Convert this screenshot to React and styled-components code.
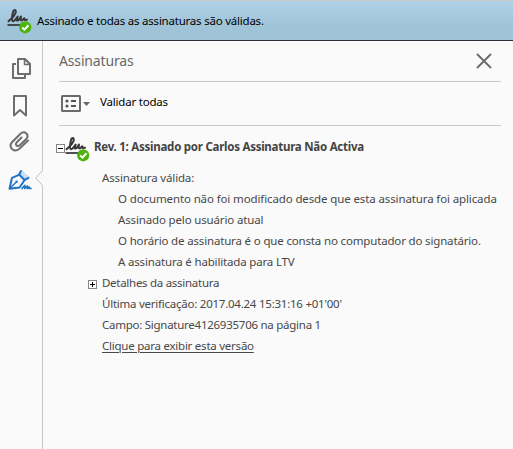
import React from "react";
import styled, { createGlobalStyle, css } from "styled-components";

const GlobalStyle = createGlobalStyle`
  * { box-sizing: border-box; }
  body {
    margin: 0;
    background: #fafafa;
    font-family: "Noto Sans", "Open Sans", sans-serif;
    font-size: 11.5px;
    color: #484848;
  }
`;

const Window = styled.div`
  display: flex;
  flex-direction: column;
  width: 513px;
  height: 449px;
  overflow: hidden;
`;

const StatusBar = styled.header`
  display: flex;
  align-items: flex-start;
  gap: 4px;
  height: 41px;
  padding: 7px 0 0 7px;
  border-top: 1px solid #c9c9c9;
  border-bottom: 1px solid #2c3038;
  background: linear-gradient(#b1d0e9 0, #9fc4d8 24px, #9fc4d8 100%);
`;

const Label = styled.span`
  display: block;
  white-space: nowrap;
  letter-spacing: ${(p) => p.$track || 0}px;
  line-height: 21px;
`;

const StatusText = styled(Label)`
  margin-top: 2px;
  color: #000;
`;

const Body = styled.div`
  display: flex;
  flex: 1;
  min-height: 0;
`;

const Sidebar = styled.nav`
  position: relative;
  width: 43px;
  flex: none;
  padding: 16px 0 0 8px;
  display: flex;
  flex-direction: column;
  border-right: 1px solid #c8c8c8;
`;

const Tool = styled.div`
  height: ${(p) => p.$h}px;
  svg { display: block; }
`;

const Notch = styled.svg`
  position: absolute;
  top: 129px;
  right: -1px;
`;

const Panel = styled.main`
  width: 442px;
  margin-left: 16px;
`;

const PanelHeader = styled.div`
  display: flex;
  justify-content: space-between;
  height: 41px;
  padding: 9px 8px 0 0;
  border-bottom: 1px solid #c8c8c8;
`;

const Title = styled.h1`
  margin: 0;
  font-size: 14px;
  font-weight: 400;
  line-height: 22px;
  letter-spacing: -0.15px;
  color: #686868;
`;

const CloseIcon = styled.svg`
  margin-top: 2px;
`;

const Toolbar = styled.div`
  display: flex;
  height: 44px;
  padding: 9px 0 0 2px;
  gap: 9px;
  border-bottom: 1px solid #c8c8c8;
  color: #000;
  svg { margin-top: 4px; }
`;

const SignatureHead = styled.div`
  display: flex;
  height: 41px;
  margin-left: -3px;
  padding-top: 10px;
`;

const Toggle = styled.svg`
  flex: none;
  ${(p) => p.$head ? css`margin: 8px 0 0;` : css`margin: 8px 5px 0 -14px;`}
`;

const Heading = styled(Label)`
  margin-left: 3px;
  font-weight: 700;
  color: #444;
`;

const Details = styled.div`
  padding-left: 43px;
`;

const Line = styled.div`
  display: flex;
  height: 21px;
  padding-left: ${(p) => (p.$nested ? 16 : 0)}px;
`;

const VersionLink = styled(Label)`
  text-decoration: underline;
  text-underline-offset: 2px;
  text-decoration-thickness: 1px;
`;

function SignedMark() {
  return (
    <svg width="26" height="26" viewBox="0 0 26 26" fill="none">
      <path d="M1.5 13.3L4.5 10.5C8 7.5 9.7 3.5 8.3 2.2C6.3 1 5.4 6 5 9.5C4.6 13.5 6 14 8 12L10.7 8.5L9.8 12.5C11.8 13 13.3 10 14 8.5C13.3 12 14 13 15.5 12L17.3 10.3L17.7 12L20 11.7" stroke="#383838" strokeWidth="2" strokeLinecap="round" strokeLinejoin="round" />
      <path d="M.5 17H13" stroke="#333" strokeWidth="1.7" />
      <circle cx="18.2" cy="19.3" r="6.1" fill="#4cb40d" />
      <path d="M15.2 19.5L17.4 21.6L21.5 17.2" stroke="#fff" strokeWidth="2" />
    </svg>
  );
}

function Expander({ open, head }) {
  return (
    <Toggle $head={head} width="9" height="9" viewBox="0 0 9 9" fill="none" shapeRendering="crispEdges">
      <rect x=".5" y=".5" width="8" height="8" fill="#fff" stroke="#858585" />
      <path d={open ? "M2 4.5H7" : "M2 4.5H7M4.5 2V7"} stroke="#000" />
    </Toggle>
  );
}

const messages = [
  ["O documento não foi modificado desde que esta assinatura foi aplicada", -0.12],
  ["Assinado pelo usuário atual", -0.15],
  ["O horário de assinatura é o que consta no computador do signatário.", -0.16],
  ["A assinatura é habilitada para LTV", -0.17],
];

export default function App() {
  return (
    <Window>
      <GlobalStyle />
      <StatusBar>
        <SignedMark />
        <StatusText $track={-0.22}>Assinado e todas as assinaturas são válidas.</StatusText>
      </StatusBar>
      <Body>
        <Sidebar>
          <Tool $h={37}>
            <svg width="24" height="24" viewBox="0 0 24 24" fill="none" stroke="#6e6e6e" strokeWidth="2" strokeLinejoin="round">
              <path d="M8 7H5V21H17V18" />
              <path d="M10 2H17L22 7V17H10Z" />
              <path d="M16.5 2V7.5H22Z" fill="#ededed" strokeWidth="1.5" />
            </svg>
          </Tool>
          <Tool $h={36}>
            <svg width="24" height="24" viewBox="0 0 24 24" fill="none" stroke="#6e6e6e" strokeWidth="2">
              <path d="M6 2H18V21.5L12 16L6 21.5Z" strokeLinejoin="round" />
            </svg>
          </Tool>
          <Tool $h={39}>
            <svg width="24" height="24" viewBox="0 0 24 24" fill="none" stroke="#6e6e6e" strokeWidth="2" strokeLinecap="round">
              <path d="M20 10.5L12 18.3C6.5 23.5 -.5 17.5 4 12.2L12.2 4C16.8 -.2 22 5 18 9.3L12 15C9.3 17.3 6.5 14.7 8.8 12.2L13.5 7.5" />
            </svg>
          </Tool>
          <Tool $h={24}>
            <svg width="26" height="24" viewBox="0 0 26 24" fill="none" stroke="#1f73c7" strokeWidth="2" strokeLinecap="round" strokeLinejoin="round">
              <path d="M14 1.5L21 7.5L16.5 11L11 5.5Z" fill="#cbdff2" stroke="none" />
              <path d="M13 2L11 5.5L16.5 11L20.5 8.8" />
              <path d="M11 5.8L4 8.8L1.5 19.8L11.5 18.5L16.3 11.5" />
              <path d="M2 19.3L7.5 13.8" strokeWidth="1.4" />
              <circle cx="8.6" cy="12.8" r="1.3" fill="#1f73c7" stroke="none" />
              <path d="M14 19.5L16.7 16.5V19.5L19.3 17V19.5L21.3 18V19.5H23" strokeWidth="1.7" />
            </svg>
          </Tool>
          <Notch width="8" height="16" viewBox="0 0 8 16">
            <path d="M8 0H7.5L.7 8L7.5 16H8Z" fill="#fafafa" />
            <path d="M7.5 0V.5L.7 8L7.5 15.5V16" fill="none" stroke="#bdbdbd" />
          </Notch>
        </Sidebar>
        <Panel>
          <PanelHeader>
            <Title>Assinaturas</Title>
            <CloseIcon width="18" height="18" viewBox="0 0 18 18" stroke="#696969" strokeWidth="1.8">
              <path d="M2 2L16 16M16 2L2 16" />
            </CloseIcon>
          </PanelHeader>
          <Toolbar>
            <svg width="30" height="18" viewBox="0 0 30 18" fill="none">
              <rect x="1" y="1" width="18" height="15" rx=".5" stroke="#6b6b6b" strokeWidth="2" />
              <circle cx="6" cy="6" r="1.6" fill="#555" />
              <circle cx="6" cy="11" r="1.6" fill="#555" />
              <path d="M10 6H15M10 11H15" stroke="#555" strokeWidth="2" />
              <path d="M22 7H29L25.5 11Z" fill="#666" />
            </svg>
            <Label $track={-0.2}>Validar todas</Label>
          </Toolbar>
          <SignatureHead>
            <Expander open head />
            <SignedMark />
            <Heading $track={-0.25}>Rev. 1: Assinado por Carlos Assinatura Não Activa</Heading>
          </SignatureHead>
          <Details>
            <Line><Label $track={-0.16}>Assinatura válida:</Label></Line>
            {messages.map(([text, track]) => (
              <Line key={text} $nested><Label $track={track}>{text}</Label></Line>
            ))}
            <Line><Expander /><Label $track={-0.28}>Detalhes da assinatura</Label></Line>
            <Line><Label $track={-0.24}>Última verificação: 2017.04.24 15:31:16 +01'00'</Label></Line>
            <Line><Label $track={-0.26}>Campo: Signature4126935706 na página 1</Label></Line>
            <Line><VersionLink $track={-0.24}>Clique para exibir esta versão</VersionLink></Line>
          </Details>
        </Panel>
      </Body>
    </Window>
  );
}
